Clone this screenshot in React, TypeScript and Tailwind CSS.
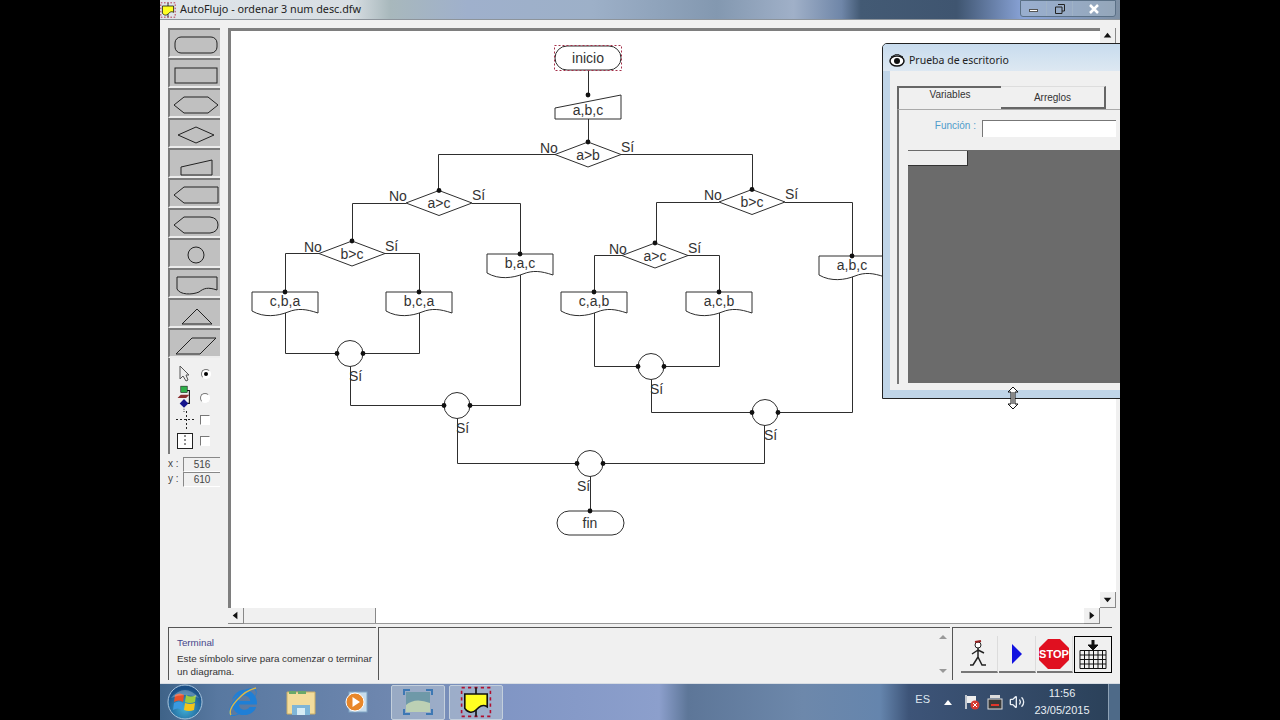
import { Volume2 } from "lucide-react";
import { FaInternetExplorer } from "react-icons/fa";

const ink = "#2e2e2e";

const Dot = ({ x, y }: { x: number; y: number }) => <circle cx={x} cy={y} r="2.4" fill="#111" />;

const Label = ({ x, y, children, anchor = "start" }: { x: number; y: number; children: string; anchor?: "start" | "middle" }) => (
  <text x={x} y={y} textAnchor={anchor} fontSize="14" fill="#333" fontFamily="Liberation Sans, sans-serif">
    {children}
  </text>
);

const Decision = ({ cx, cy, text, noDx = -48 }: { cx: number; cy: number; text: string; noDx?: number }) => (
  <g>
    <path d={`M${cx - 33} ${cy}L${cx} ${cy - 12.5}L${cx + 33} ${cy}L${cx} ${cy + 12.5}Z`} fill="#fff" stroke={ink} />
    <Label x={cx} y={cy + 5} anchor="middle">{text}</Label>
    <Dot x={cx} y={cy - 12.5} />
    <Label x={cx + noDx} y={cy - 2}>No</Label>
    <Label x={cx + 33} y={cy - 3}>Sí</Label>
  </g>
);

const Doc = ({ x, y, text }: { x: number; y: number; text: string }) => (
  <g>
    <path d={`M${x} ${y}h66v21c-12 -4 -20 -5 -30 -1c-10 4 -24 6 -36 -1z`} fill="#fff" stroke={ink} />
    <Label x={x + 33} y={y + 14} anchor="middle">{text}</Label>
    <Dot x={x + 33} y={y} />
  </g>
);

const Join = ({ cx, cy, siDx = -1 }: { cx: number; cy: number; siDx?: number }) => (
  <g>
    <circle cx={cx} cy={cy} r="13" fill="#fff" stroke={ink} />
    <Dot x={cx - 13} y={cy} />
    <Dot x={cx + 13} y={cy} />
    <Label x={cx + siDx} y={cy + 27}>Sí</Label>
  </g>
);

const Flowchart = () => (
  <svg width="869" height="577" viewBox="231 31 869 577" className="block">
    <g fill="none" stroke={ink}>
      <path d="M588.5 70V95M588.5 119V142" />
      <path d="M555 154.500H438.500V190M621 154.500H752.500V189" />
      <path d="M406 203.500H352.500V241M472 203.500H520.500V254M520.500 275V405.500H470" />
      <path d="M319 253.500H285.500V292M385 253.500H419.500V292M285.500 313V353.500H337M363 353.500H419.500V313" />
      <path d="M350.500 366V405.500H444M457.500 418V463.500H577M603 463.500H764.500V425" />
      <path d="M778 412.500H852.500V202.500H785M719 202.500H656.500V243" />
      <path d="M622 255.500H594.500V292M688 255.500H719.500V292M594.500 313V366.500H638M664 366.500H719.500V313" />
      <path d="M651.500 379V412.500H752M590.500 476V511" />
    </g>

    <rect x="555" y="46" width="66" height="24" rx="12" fill="#fff" stroke={ink} />
    <rect x="554.500" y="45.500" width="67" height="25" fill="none" stroke="#a5304a" strokeDasharray="2 2" />
    <Label x={588} y={63} anchor="middle">inicio</Label>

    <path d="M555 108L621 95V119H555Z" fill="#fff" stroke={ink} />
    <Label x={588} y={115} anchor="middle">a,b,c</Label>
    <Dot x={588} y={95} />

    <Decision cx={588} cy={154.5} text="a>b" />
    <Decision cx={439} cy={203} text="a>c" noDx={-50} />
    <Decision cx={752} cy={202} text="b>c" />
    <Decision cx={352} cy={253.5} text="b>c" />
    <Decision cx={655} cy={255.5} text="a>c" noDx={-46} />

    <Doc x={252} y={292} text="c,b,a" />
    <Doc x={386} y={292} text="b,c,a" />
    <Doc x={487} y={254} text="b,a,c" />
    <Doc x={561} y={292} text="c,a,b" />
    <Doc x={686} y={292} text="a,c,b" />
    <Doc x={819} y={256} text="a,b,c" />

    <Join cx={350} cy={353.5} />
    <Join cx={457} cy={405.5} />
    <Join cx={651} cy={366.5} />
    <Join cx={765} cy={412.5} />
    <Join cx={590} cy={463.5} siDx={-13} />

    <rect x="557" y="511" width="67" height="24" rx="12" fill="#fff" stroke={ink} />
    <Label x={590} y={528} anchor="middle">fin</Label>
    <Dot x={590} y={511} />
  </svg>
);

const toolShapes = [
  <rect x="7" y="8" width="42" height="16" rx="6" />,
  <rect x="7" y="9" width="42" height="15" />,
  <path d="M6 16L16 8H40L50 16L40 24H16Z" />,
  <path d="M10 16L28 8L46 16L28 24Z" />,
  <path d="M13 18L44 11V26H13Z" />,
  <path d="M6 16L16 8H50V24H16Z" />,
  <path d="M6 16L16 8H42Q50 9 50 16Q50 23 42 24H16Z" />,
  <circle cx="28" cy="16" r="8" />,
  <path d="M9 8H49V21C40 18 36 19 31 23C24 26 12 26 9 20Z" />,
  <path d="M14 25L29 10L44 25Z" />,
  <path d="M8 25L24 9H48L32 25Z" />,
];

const Palette = () => (
  <div className="flex flex-col w-[52px]">
    {toolShapes.map((shape, i) => (
      <div key={i} className="h-[30px] bg-[#c0c0c0] border-t-2 border-l-2 border-b-2 border-t-[#7c7c7c] border-l-[#7c7c7c] border-b-[#ececec]">
        <svg width="50" height="26" viewBox="2 1 50 26" fill="none" stroke="#222" className="block">
          {shape}
        </svg>
      </div>
    ))}
  </div>
);

const Radio = ({ on }: { on?: boolean }) => (
  <span className="w-[10px] h-[10px] rounded-full bg-white border border-t-[#777] border-l-[#777] border-b-white border-r-white flex items-center justify-center">
    {on && <span className="w-1 h-1 rounded-full bg-black" />}
  </span>
);

const Check = () => <span className="w-[10px] h-[10px] bg-white border border-t-[#777] border-l-[#777] border-b-white border-r-white" />;

const Options = () => (
  <div className="flex flex-col w-[52px] h-[96px] border-l-2 border-[#7c7c7c] text-[10px]">
    <div className="h-[28px] shrink-0 flex items-center gap-[11px] pl-[8px] pt-[4px]">
      <svg width="12" height="18" viewBox="0 0 12 18" className="shrink-0">
        <path d="M2 1V14L5 11L8 16L10 15L8 10H11Z" fill="#eee" stroke="#555" />
      </svg>
      <Radio on />
    </div>
    <div className="h-[24px] shrink-0 flex items-center gap-[8px] pl-[6px]">
      <svg width="16" height="28" viewBox="0 0 14 26" className="shrink-0">
        <path d="M7 6H12V18H7" fill="none" stroke="#111" />
        <rect x="4" y="2" width="6" height="6" fill="#2fb04a" stroke="#111" strokeWidth="0.5" />
        <path d="M1 13L4 10H12L9 13Z" fill="#8a2d2d" />
        <path d="M7 14L11 18L7 22L3 18Z" fill="#14148c" />
        <path d="M7 23V26" stroke="#555" strokeDasharray="1 1" />
      </svg>
      <Radio />
    </div>
    <div className="h-[20px] shrink-0 flex items-center gap-[4px] pl-[6px]">
      <svg width="20" height="20" viewBox="0 0 20 20" className="shrink-0">
        <path d="M0 9.500H20M10.500 1V19" stroke="#222" strokeDasharray="2 2" />
      </svg>
      <Check />
    </div>
    <div className="h-[22px] shrink-0 flex items-center gap-[7px] pl-[7px]">
      <svg width="16" height="16" viewBox="0 0 16 16" className="shrink-0">
        <rect x="0.500" y="0.500" width="15" height="15" fill="#fff" stroke="#222" />
        <path d="M8 2V14" stroke="#222" strokeDasharray="2 2" />
      </svg>
      <Check />
    </div>
  </div>
);

const Coords = () => (
  <div className="flex flex-col w-[52px] text-[10px] text-[#444] leading-[14px] mt-[3px]">
    {[["x :", "516"], ["y :", "610"]].map(([k, v]) => (
      <div key={k} className="flex h-[15px]">
        <span className="w-[15px]">{k}</span>
        <span className="flex-1 text-center border-t border-l border-[#888] border-b border-b-white">{v}</span>
      </div>
    ))}
  </div>
);

const ArrowBtn = ({ dir }: { dir: "up" | "down" | "left" | "right" }) => {
  const d = { up: "M8 5L12 10H4Z", down: "M8 11L4 6H12Z", left: "M5 8L10 4V12Z", right: "M11 8L6 4V12Z" }[dir];
  return (
    <div className="w-[16px] h-[16px] shrink-0 bg-[#f0f0f0] border-b border-r border-[#888]">
      <svg width="15" height="15" viewBox="0 0 16 16"><path d={d} fill="#111" /></svg>
    </div>
  );
};

const Canvas = () => (
  <div className="flex flex-col w-[888px]">
    <div className="flex h-[580px]">
      <div className="w-[872px] border-t-[3px] border-l-[3px] border-[#7e7e7e] bg-white overflow-hidden">
        <Flowchart />
      </div>
      <div className="w-[16px] flex flex-col justify-between bg-white">
        <ArrowBtn dir="up" />
        <ArrowBtn dir="down" />
      </div>
    </div>
    <div className="flex h-[16px] w-[872px] bg-white border-b border-[#999]">
      <ArrowBtn dir="left" />
      <div className="w-[132px] bg-[#f0f0f0] border-r border-[#888]" />
      <div className="flex-1" />
      <ArrowBtn dir="right" />
    </div>
  </div>
);

const RunButton = ({ children }: { children: React.ReactNode }) => (
  <div className="w-[37px] h-[37px] mr-[1px] flex items-center justify-center border-b-2 border-b-[#777] border-r border-r-[#dcdcdc] bg-[#f0f0f0]">
    {children}
  </div>
);

const StatusPanel = () => (
  <div className="flex h-[53px] mt-[3px] ml-2 gap-[2px]">
    <div className="w-[208px] border-t border-l border-[#555] pl-[8px] pt-[8px] text-[9.8px] leading-[13px] text-[#333]">
      <div className="text-[#47478c] mb-[3px]">Terminal</div>
      <div>Este símbolo sirve para comenzar o terminar un diagrama.</div>
    </div>
    <div className="w-[572px] border-t border-l border-[#555] relative">
      <div className="absolute right-[1px] top-0 bottom-0 w-[12px] flex flex-col justify-between py-[6px] items-center">
        <svg width="8" height="6"><path d="M4 1L8 5H0Z" fill="#999" /></svg>
        <svg width="8" height="6"><path d="M4 5L0 1H8Z" fill="#999" /></svg>
      </div>
    </div>
    <div className="w-[160px] border-t border-l border-[#555] pl-[8px] pt-[8px] flex">
      <RunButton>
        <svg width="24" height="32" viewBox="0 0 24 32" fill="none" stroke="#222">
          <circle cx="11" cy="7" r="3" fill="#fff" />
          <path d="M8 4L14 3" stroke="#922" strokeWidth="2" />
          <path d="M11 10V19M11 12L5 16M11 12L17 15M11 19L6 27H3M11 19L15 27H19" strokeWidth="1.500" />
        </svg>
      </RunButton>
      <RunButton>
        <svg width="14" height="20" viewBox="0 0 14 20"><path d="M2 0L12 10L2 20Z" fill="#1212e0" /></svg>
      </RunButton>
      <RunButton>
        <svg width="30" height="30" viewBox="0 0 30 30">
          <path d="M9 0H21L30 9V21L21 30H9L0 21V9Z" fill="#e01020" />
          <text x="15" y="19" textAnchor="middle" fontSize="11" fontWeight="700" fill="#fff" fontFamily="Liberation Sans, sans-serif">STOP</text>
        </svg>
      </RunButton>
      <div className="w-[38px] h-[37px] border border-black flex items-center justify-center bg-[#f0f0f0]">
        <svg width="28" height="30" viewBox="0 0 28 30" fill="none" stroke="#111">
          <path d="M14 0V6" strokeWidth="3" />
          <path d="M9 5H19L14 10Z" fill="#111" />
          <path d="M1 10.500H27V28.500H1ZM1 15H27M1 19.500H27M1 24H27M5.500 10V29M10 10V29M14.500 10V29M19 10V29M23.500 10V29" />
        </svg>
      </div>
    </div>
  </div>
);

const DesktopCheckWindow = () => (
  <div className="absolute left-[722px] top-[43px] w-[280px] h-[356px] rounded-tl-[5px] border border-[#222] bg-[#c0d5e8] overflow-hidden">
    <div className="h-[27px] flex items-center gap-[4px] pl-[6px] pt-[6px] text-[10.5px] text-[#222] font-['Noto_Sans',sans-serif] bg-gradient-to-b from-[#c8dcee] to-[#dde8f2]">
      <svg width="16" height="14" viewBox="0 0 16 14">
        <ellipse cx="8" cy="7" rx="7" ry="5" fill="#fff" stroke="#111" strokeWidth="1.500" />
        <circle cx="8" cy="7" r="3" fill="#111" />
        <path d="M2 3L8 0L14 3" fill="none" stroke="#111" />
      </svg>
      <span>Prueba de escritorio</span>
    </div>
    <div className="ml-[7px] h-[319px] bg-[#f0f0f0] pl-[7px] pt-[15px] text-[10px] text-[#333]">
      <div className="flex h-[23px]">
        <div className="w-[104px] text-center border-t-2 border-l-2 border-[#666] leading-[14px]">Variables</div>
        <div className="w-[105px] text-center border-b-2 border-r-2 border-[#666] pt-[4px] leading-[14px] border-t border-t-[#ddd]">Arreglos</div>
      </div>
      <div className="border-l-2 border-[#777] border-t border-t-[#aaa] pl-[9px] h-[275px]">
        <div className="flex items-center h-[40px] pb-[3px]">
          <span className="w-[74px] text-right pr-[6px] pb-[6px] text-[#4f9ccb]">Función :</span>
          <div className="w-[134px] h-[17px] bg-white border-t border-l border-[#777]" />
        </div>
        <div className="bg-[#6b6b6b] h-[233px] pt-[1px]">
          <div className="w-[60px] h-[15px] bg-[#efefef] border-b border-r border-[#333]" />
        </div>
      </div>
    </div>
  </div>
);

const ResizeCursor = () => (
  <svg width="12" height="24" viewBox="0 0 12 24" className="absolute left-[847px] top-[386px]">
    <path d="M6 1L11 6H8V18H11L6 23L1 18H4V6H1Z" fill="#fff" stroke="#111" />
    <path d="M6 6V18" stroke="#111" />
  </svg>
);

const WindowControls = () => (
  <div className="flex h-[17px] border border-[#5a7086] rounded-b-[3px] bg-[#a4b5c8]/60">
    <div className="w-[26px] flex items-center justify-center border-r border-[#9fb2c5]">
      <span className="w-[9px] h-[3px] bg-white border border-[#555] mt-[3px]" />
    </div>
    <div className="w-[26px] flex items-center justify-center border-r border-[#9fb2c5]">
      <svg width="10" height="10"><path d="M3 .5H9.500V7H7M.5 3H7V9.500H.5Z" fill="none" stroke="#222" /></svg>
    </div>
    <div className="w-[42px] flex items-center justify-center">
      <svg width="10" height="10"><path d="M1 1L9 9M9 1L1 9" stroke="#fff" strokeWidth="2.500" /></svg>
    </div>
  </div>
);

const AppGlyph = ({ size }: { size: number }) => (
  <svg width={size} height={size} viewBox="0 0 20 20">
    <rect x="1" y="1" width="18" height="18" fill="none" stroke="#b01030" strokeDasharray="2 2" />
    <path d="M3 5H17V13C14 11 12 13 10 15C8 17 5 17 3 14Z" fill="#ffff22" stroke="#111" />
    <path d="M10 1V5M10 15V19" stroke="#111" />
  </svg>
);

const TitleBar = () => (
  <div className="h-[20px] shrink-0 flex justify-between pr-[4px] border-b border-[#8d949b] bg-[linear-gradient(to_right,#dfe5ea_0%,#d8dee3_20%,#a8b8bc_24%,#9fb0cc_32%,#9db0c8_45%,#8398b0_58%,#a0b0c8_66%,#6f86a8_71%,#435a74_73%,#3f5570_83%,#8aa4d8_90%,#7d8fa3_100%)]">
    <div className="flex items-center gap-[4px] text-[10.8px] text-[#222] font-['Noto_Sans',sans-serif]">
      <AppGlyph size={16} />
      <span>AutoFlujo - ordenar 3 num desc.dfw</span>
    </div>
    <WindowControls />
  </div>
);

const TaskButton = ({ children }: { children: React.ReactNode }) => (
  <div className="w-[54px] h-[35px] flex items-center justify-center rounded-[2px] border border-[#c3cfdc] bg-[#b4c2d2]/60">
    {children}
  </div>
);

const Taskbar = () => (
  <div className="h-[37px] shrink-0 flex items-center border-t border-[#d8dde3] bg-[linear-gradient(to_right,#3f6388_0%,#5878a0_6%,#7088b0_25%,#8095c4_35%,#8c9fcc_52%,#5d7698_55%,#6d88ab_67%,#6585ad_75%,#3d5478_78%,#2a4058_100%)]">
    <div className="w-[50px] flex justify-center">
      <svg width="36" height="36" viewBox="0 0 36 36">
        <defs>
          <radialGradient id="orb" cx="50%" cy="70%" r="60%">
            <stop offset="0%" stopColor="#3fb0d8" />
            <stop offset="100%" stopColor="#1b4f86" />
          </radialGradient>
        </defs>
        <circle cx="18" cy="18" r="17" fill="url(#orb)" stroke="#a9c6de" />
        <path d="M8 11Q13 8 17 11L16 18Q12 15 7 18Z" fill="#e8502a" />
        <path d="M19 11Q24 14 29 11L28 18Q23 20 18 18Z" fill="#9ccc3f" />
        <path d="M7 19Q12 16 16 19L15 26Q11 23 6 26Z" fill="#3a9ae0" />
        <path d="M18 19Q23 21 28 19L27 26Q22 28 17 26Z" fill="#f5c518" />
        <path d="M4 14Q18 -2 32 14Q18 8 4 14Z" fill="#fff" opacity="0.25" />
      </svg>
    </div>
    <div className="relative w-[66px] flex justify-center">
      <FaInternetExplorer className="w-[28px] h-[28px] text-[#1f7fd6]" />
      <svg width="34" height="34" viewBox="0 0 34 34" className="absolute left-[16px] top-[-3px]" fill="none">
        <path d="M5 30C1 24 16 6 30 3" stroke="#d9b64a" strokeWidth="1.500" />
      </svg>
    </div>
    <div className="w-[50px] flex justify-center">
      <svg width="30" height="28" viewBox="0 0 30 28">
        <path d="M1 4H29V26H1Z" fill="#f3dc9c" stroke="#c9ad66" />
        <path d="M3 3H10V6H3ZM12 3H20V6H12Z" fill="#6aa86a" />
        <rect x="6" y="17" width="18" height="10" fill="#7fb6d8" />
        <rect x="11" y="20" width="8" height="7" fill="#d6ecf5" />
      </svg>
    </div>
    <div className="w-[62px] flex justify-center">
      <svg width="24" height="24" viewBox="0 0 24 24">
        <rect x="4" y="2" width="18" height="20" fill="#c7dcec" stroke="#7fa4c4" />
        <circle cx="10" cy="12" r="9" fill="#e8872a" stroke="#fff" />
        <path d="M7.500 7L15 12L7.500 17Z" fill="#fff" />
      </svg>
    </div>
    <div className="w-[3px]" />
    <TaskButton>
      <svg width="30" height="26" viewBox="0 0 30 26">
        <rect x="3" y="3" width="24" height="20" fill="#6f99a8" />
        <path d="M3 16Q12 8 27 14V23H3Z" fill="#bcd0b4" />
        <path d="M1 6V1H7M23 1H29V6M29 20V25H23M7 25H1V20" fill="none" stroke="#3d78b4" strokeWidth="2" />
      </svg>
    </TaskButton>
    <div className="w-[4px]" />
    <TaskButton>
      <AppGlyph size={32} />
    </TaskButton>
    <div className="flex-1" />
    <span className="text-[11px] mr-[14px] mb-[5px] text-[#dfe7ef]">ES</span>
    <svg width="8" height="5" className="mr-[12px]"><path d="M4 0L8 5H0Z" fill="#fff" /></svg>
    <svg width="16" height="16" viewBox="0 0 16 16" className="mr-[7px]">
      <path d="M2 1V15" stroke="#eee" strokeWidth="1.500" />
      <path d="M3 2H12V9H3Z" fill="#eee" />
      <circle cx="11" cy="11" r="4.500" fill="#d63a32" />
      <path d="M9 9L13 13M13 9L9 13" stroke="#fff" />
    </svg>
    <svg width="16" height="16" viewBox="0 0 16 16" className="mr-[6px]">
      <rect x="1" y="5" width="14" height="10" fill="#3a3a3a" stroke="#ddd" />
      <path d="M3 1H13V4H3Z" fill="#ddd" />
      <path d="M4 11H12" stroke="#e0352b" strokeWidth="2" />
    </svg>
    <Volume2 className="w-[16px] h-[16px] text-[#e8eef4] mr-[1px]" />
    <div className="w-[72px] text-center text-[11px] leading-[17px] text-[#e8eef4]">
      <div>11:56</div>
      <div>23/05/2015</div>
    </div>
    <div className="w-[12px] h-[36px] ml-[10px] border-l border-[#8ea2b6] bg-[#4e6a88]" />
  </div>
);

export default function App() {
  return (
    <div className="flex w-[1280px] h-[720px] bg-black overflow-hidden font-['Liberation_Sans',sans-serif]">
      <div className="w-[160px] shrink-0" />
      <div className="relative w-[960px] shrink-0 flex flex-col overflow-hidden">
        <TitleBar />
        <div className="flex-1 flex flex-col bg-[#f0f0f0] pt-2">
          <div className="flex">
            <div className="ml-2 flex flex-col">
              <Palette />
              <Options />
              <Coords />
            </div>
            <div className="ml-2">
              <Canvas />
            </div>
          </div>
          <StatusPanel />
        </div>
        <Taskbar />
        <DesktopCheckWindow />
        <ResizeCursor />
      </div>
      <div className="w-[160px] shrink-0" />
    </div>
  );
}
